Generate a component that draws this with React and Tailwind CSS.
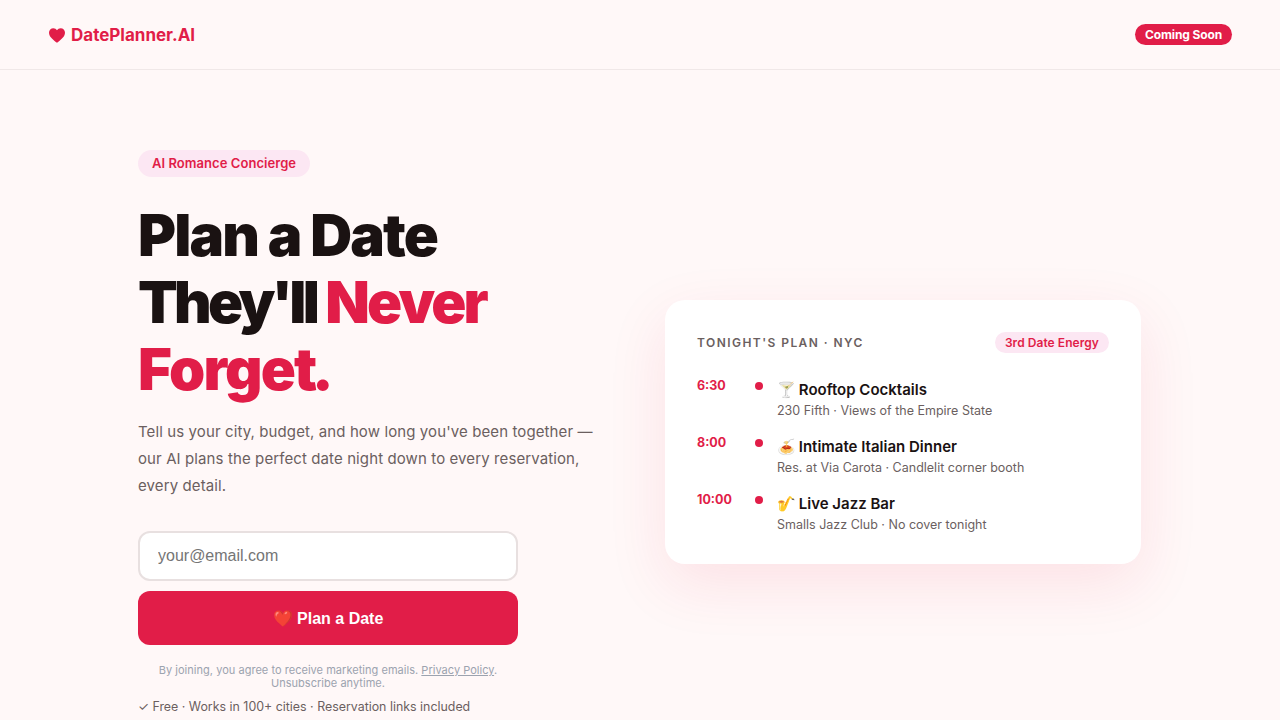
const plan = [
  { time: "6:30", emoji: "🍸", title: "Rooftop Cocktails", note: "230 Fifth · Views of the Empire State" },
  { time: "8:00", emoji: "🍝", title: "Intimate Italian Dinner", note: "Res. at Via Carota · Candlelit corner booth" },
  { time: "10:00", emoji: "🎷", title: "Live Jazz Bar", note: "Smalls Jazz Club · No cover tonight" },
];

const App = () => {
  return (
    <div className="min-h-screen bg-[#fff8f8] font-['Inter',sans-serif] text-[#1a1212] [font-optical-sizing:none]">
      <header className="flex h-[70px] items-center justify-between border-b border-[#f0e8e8] px-12">
        <div className="flex items-center gap-1.5 pt-[2px] text-[17px] font-bold text-[#e11d48]">
          <svg className="ml-px" width="16" height="15" viewBox="0 0 24 22" fill="#e11d48">
            <path d="M12 22C8 18.500 0 13.500 0 6.800 0 3 2.900 0 6.500 0 8.800 0 10.800 1.200 12 3.100 13.200 1.200 15.200 0 17.500 0 21.100 0 24 3 24 6.800 24 13.500 16 18.500 12 22Z" />
          </svg>
          <span>DatePlanner.AI</span>
        </div>
        <span className="rounded-full bg-[#e11d48] px-2.5 py-[3px] text-xs leading-[15px] font-bold tracking-[-0.01em] text-white">
          Coming Soon
        </span>
      </header>

      <main className="mx-auto grid max-w-[1100px] grid-cols-[477px_476px] items-center gap-[50px] px-12 pt-20 pb-20">
        <div>
          <span className="inline-block rounded-full bg-[#fce7f3] px-3.5 py-[5px] text-[13px] leading-[17px] font-semibold tracking-[0.004em] text-[#e11d48]">
            AI Romance Concierge
          </span>
          <h1 className="mt-[25px] text-[58px] leading-[67px] font-black tracking-[-0.04em]">
            <span className="tracking-[-0.032em]">Plan a Date</span>
            <br />
            <span className="tracking-[-0.065em]">They'll</span>{" "}
            <span className="text-[#e11d48]">
              <span className="tracking-[-0.05em]">Never</span>{" "}
              <span className="tracking-[-0.031em]">Forge</span>
              <span className="tracking-[-0.09em]">t</span>.
            </span>
          </h1>
          <p className="mt-[15px] max-w-[460px] text-[15px] leading-[27px] tracking-[0.007em] text-[#6b5f5f]">
            Tell us your city, budget, and how long you've been together — our AI plans the perfect date night down to every reservation, every detail.
          </p>
          <form className="mt-[32px] flex w-[380px] flex-col gap-2.5" onSubmit={(e) => e.preventDefault()}>
            <input
              className="h-[50px] rounded-xl border-2 border-[#e8e0e0] bg-white px-[18px] font-['Liberation_Sans',sans-serif] text-base text-[#1a1212] outline-none placeholder:text-[#757575]"
              type="email"
              placeholder="your@email.com"
            />
            <button className="h-[54px] rounded-xl bg-[#e11d48] pt-0.5 font-['Liberation_Sans',sans-serif] text-base font-bold text-white">
              ❤️ Plan a Date
            </button>
          </form>
          <p className="mt-[19px] w-[380px] text-center text-[11px] leading-[13px] tracking-[0.003em] text-[#9ca3af]">
            By joining, you agree to receive marketing emails. <a className="underline" href="#">Privacy Policy</a>. Unsubscribe anytime.
          </p>
          <p className="mt-[9px] text-[12.4px] leading-[15px] text-[#6b5f5f]">
            ✓ Free · Works in 100+ cities · Reservation links included
          </p>
        </div>

        <div className="rounded-[20px] bg-white p-8 pb-[31px] shadow-[0_20px_60px_rgba(225,29,72,0.1)]">
          <div className="flex items-center justify-between">
            <span className="text-xs font-semibold tracking-[0.12em] text-[#6b5f5f]">
              TONIGHT'S PLAN · NYC
            </span>
            <span className="rounded-full bg-[#fce7f3] px-2.5 py-[3px] text-xs leading-[15px] font-semibold tracking-[0.005em] text-[#e11d48]">
              3rd Date Energy
            </span>
          </div>
          <div className="mt-[25px] flex flex-col gap-[16px]">
            {plan.map((item) => (
              <div className="flex" key={item.time}>
                <span className="w-[48px] shrink-0 text-[12.5px] leading-4 font-bold text-[#e11d48]">{item.time}</span>
                <span className="mt-1 ml-[10px] h-2 w-2 shrink-0 rounded-full bg-[#e11d48]"></span>
                <div className="ml-[14px]">
                  <div className="text-[15px] leading-6 font-semibold text-[#1a1212]"><span className="mr-[-1px]">{item.emoji}</span> {item.title}</div>
                  <div className="mt-px text-[12.5px] leading-4 text-[#6b5f5f]">{item.note}</div>
                </div>
              </div>
            ))}
          </div>
        </div>
      </main>
    </div>
  );
};

export default App;
